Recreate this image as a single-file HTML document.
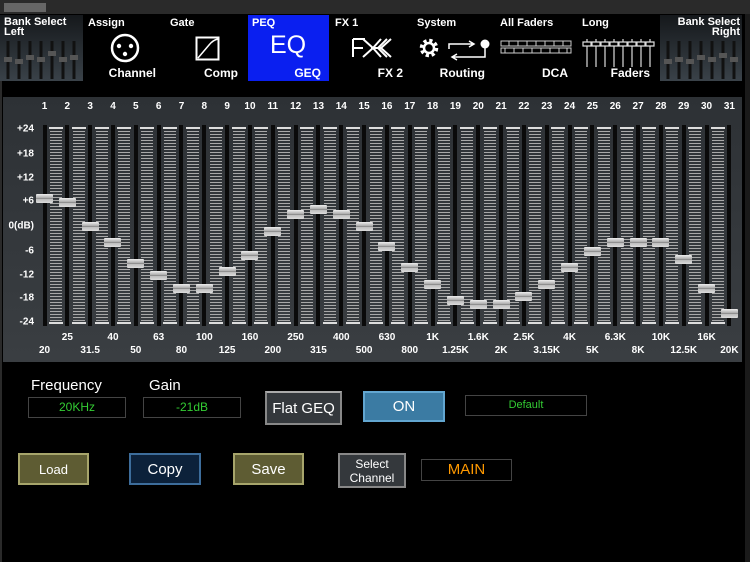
<!DOCTYPE html>
<html><head><meta charset="utf-8"><style>
*{margin:0;padding:0;box-sizing:border-box}
body{width:750px;height:562px;background:#000;overflow:hidden;font-family:"Liberation Sans",Arial,sans-serif;color:#fff;position:relative}
.abs{position:absolute}
.tab{position:absolute;top:15px;height:66px;background:#000;font-weight:bold;font-size:11px}
.tab .t{position:absolute;left:4px;top:2px}
.tab .b{position:absolute;right:8px;bottom:1px;font-size:12px}
.bank{background:linear-gradient(#15181b,#3a4249)}
.panel{position:absolute;left:3px;top:97px;width:739px;height:265px;background:linear-gradient(#2d3135,#3a3e42)}
.lbl{position:absolute;font-weight:bold;font-size:10px;color:#fff;transform:translateX(-50%);white-space:nowrap}
.db{position:absolute;font-weight:bold;font-size:10px;right:716px;transform:translateY(-50%)}
.slot{position:absolute;width:4px;background:#0a0a0a;top:125px;height:201px}
.lad{position:absolute;width:12px;top:128px;height:195px;background:repeating-linear-gradient(#a8a8a8 0 1px,transparent 1px 3px)}
.lad:before{content:"";position:absolute;left:-1px;right:-1px;top:-1px;height:2px;background:#ddd}
.lad:after{content:"";position:absolute;left:-1px;right:-1px;bottom:-1px;height:2px;background:#ddd}
.cap{position:absolute;width:17px;height:9px;background:linear-gradient(#eee,#aaa 45%,#666 50%,#bbb 55%,#ddd);border-radius:1px}
.box{position:absolute;border:1px solid #444;color:#3c3;font-size:12px;text-align:center;background:#000}
.btn{position:absolute;display:flex;align-items:center;justify-content:center;text-align:center;color:#fff}
</style></head><body>
<div class="abs" style="left:0;top:0;width:750px;height:14px;background:#2a2a2a"></div>
<div class="abs" style="left:4px;top:3px;width:42px;height:9px;background:#666"></div>
<div class="abs" style="left:745px;top:14px;width:5px;height:548px;background:#1a1a1a"></div>
<div class="abs" style="left:0;top:81px;width:2px;height:481px;background:#2a2a2a"></div>

<div class="tab bank" style="left:0;width:83px"><div class="t" style="line-height:10px">Bank Select<br>Left</div>
<svg class="abs" style="left:4px;top:26px" width="76" height="38"><g stroke="#111" stroke-width="3"><path d="M4 0V38M15 0V38M26 0V38M37 0V38M48 0V38M59 0V38M70 0V38"/></g><g fill="#555"><rect x="0" y="16" width="8" height="5"/><rect x="11" y="18" width="8" height="5"/><rect x="22" y="14" width="8" height="5"/><rect x="33" y="16" width="8" height="5"/><rect x="44" y="10" width="8" height="5"/><rect x="55" y="16" width="8" height="5"/><rect x="66" y="14" width="8" height="5"/></g></svg></div>
<div class="tab" style="left:84px;width:80px"><div class="t">Assign</div><div class="b">Channel</div>
<svg class="abs" style="left:26px;top:18px" width="30" height="30"><circle cx="15" cy="15" r="13" fill="none" stroke="#fff" stroke-width="2.5"/><circle cx="9" cy="13" r="2.2" fill="#fff"/><circle cx="21" cy="13" r="2.2" fill="#fff"/><circle cx="15" cy="21" r="2.2" fill="#fff"/></svg></div>
<div class="tab" style="left:166px;width:80px"><div class="t">Gate</div><div class="b">Comp</div>
<svg class="abs" style="left:29px;top:21px" width="26" height="26"><rect x="1.5" y="1.5" width="22" height="22" fill="none" stroke="#fff" stroke-width="2"/><path d="M3 22L14 9Q18 4 23 3" fill="none" stroke="#fff" stroke-width="1.5"/></svg></div>
<div class="tab" style="left:248px;width:81px;background:#0a1ff0"><div class="t">PEQ</div><div class="b">GEQ</div>
<div class="abs" style="left:22px;top:16px;font-size:25px;font-weight:normal">EQ</div></div>
<div class="tab" style="left:331px;width:80px"><div class="t">FX 1</div><div class="b">FX 2</div>
<svg class="abs" style="left:20px;top:22px" width="44" height="22"><path d="M2 2H14M2 2V20M2 11H12M12 2L22 11L12 20M20 11H30M30 2L22 11L30 20M40 2L30 11L40 20M36 2L27 11L36 20" fill="none" stroke="#fff" stroke-width="2"/></svg></div>
<div class="tab" style="left:413px;width:80px"><div class="t">System</div><div class="b">Routing</div>
<svg class="abs" style="left:4px;top:20px" width="74" height="26"><circle cx="12" cy="13" r="7" fill="none" stroke="#fff" stroke-width="4.5" stroke-dasharray="3 2.5"/><circle cx="12" cy="13" r="5" fill="none" stroke="#fff" stroke-width="2.5"/><path d="M32 14V9H56M52 6L57 9L52 12M36 22H68V11M40 19L35 22L40 25" fill="none" stroke="#fff" stroke-width="1.5"/><circle cx="68" cy="9" r="4.5" fill="#fff"/></svg></div>
<div class="tab" style="left:496px;width:80px"><div class="t">All Faders</div><div class="b">DCA</div>
<svg class="abs" style="left:4px;top:25px" width="72" height="14"><g fill="none" stroke="#ccc" stroke-width="1"><path d="M1 1h70v5H1zM1 8h70v5H1z"/><path d="M9 1v5M18 1v5M27 1v5M36 1v5M45 1v5M54 1v5M63 1v5M5 8v5M14 8v5M23 8v5M32 8v5M41 8v5M50 8v5M59 8v5M67 8v5"/></g></svg></div>
<div class="tab" style="left:578px;width:80px"><div class="t">Long</div><div class="b">Faders</div>
<svg class="abs" style="left:4px;top:24px" width="74" height="30"><g fill="none" stroke="#ddd" stroke-width="1.2"><path d="M5 0V28M14 0V28M23 0V28M32 0V28M41 0V28M50 0V28M59 0V28M68 0V28"/><path d="M1 3h8v4H1zM10 3h8v4h-8zM19 3h8v4h-8zM28 3h8v4h-8zM37 3h8v4h-8zM46 3h8v4h-8zM55 3h8v4h-8zM64 3h8v4h-8z" fill="#000"/></g></svg></div>
<div class="tab bank" style="left:660px;width:82px"><div class="t" style="left:auto;right:2px;text-align:right;line-height:10px">Bank Select<br>Right</div>
<svg class="abs" style="left:4px;top:26px" width="76" height="38"><g stroke="#111" stroke-width="3"><path d="M4 0V38M15 0V38M26 0V38M37 0V38M48 0V38M59 0V38M70 0V38"/></g><g fill="#555"><rect x="0" y="18" width="8" height="5"/><rect x="11" y="16" width="8" height="5"/><rect x="22" y="18" width="8" height="5"/><rect x="33" y="14" width="8" height="5"/><rect x="44" y="16" width="8" height="5"/><rect x="55" y="12" width="8" height="5"/><rect x="66" y="16" width="8" height="5"/></g></svg></div>

<div class="panel"></div>
<div id="g"></div>

<div class="abs" style="left:31px;top:377px;font-size:15px">Frequency</div>
<div class="abs" style="left:149px;top:377px;font-size:15px">Gain</div>
<div class="box" style="left:28px;top:397px;width:98px;height:21px;line-height:19px">20KHz</div>
<div class="box" style="left:143px;top:397px;width:98px;height:21px;line-height:19px">-21dB</div>
<div class="btn" style="left:265px;top:391px;width:77px;height:34px;background:#34383c;border:2px solid #888;border-top-color:#aaa;font-size:15px">Flat GEQ</div>
<div class="btn" style="left:363px;top:391px;width:82px;height:31px;background:#3b7ba3;border:2px solid #62a6d0;font-size:15px">ON</div>
<div class="box" style="left:465px;top:395px;width:122px;height:21px;line-height:19px;font-size:11px">Default</div>
<div class="btn" style="left:18px;top:453px;width:71px;height:32px;background:#5e5c33;border:2px solid #a7a56b;font-size:13px">Load</div>
<div class="btn" style="left:129px;top:453px;width:72px;height:32px;background:#0c213a;border:2px solid #3d6d9b;font-size:15px">Copy</div>
<div class="btn" style="left:233px;top:453px;width:71px;height:32px;background:#5e5c33;border:2px solid #a7a56b;font-size:15px">Save</div>
<div class="btn" style="left:338px;top:453px;width:68px;height:35px;background:#34383c;border:2px solid #888;font-size:12px;line-height:14px">Select<br>Channel</div>
<div class="box" style="left:421px;top:459px;width:91px;height:22px;line-height:20px;color:#f90;font-size:15px">MAIN</div>

<script>
var f=["20","25","31.5","40","50","63","80","100","125","160","200","250","315","400","500","630","800","1K","1.25K","1.6K","2K","2.5K","3.15K","4K","5K","6.3K","8K","10K","12.5K","16K","20K"];
var cy=[198,202,226,242,263,275,288,288,271,255,231,214,209,214,226,246,267,284,300,304,304,296,284,267,251,242,242,242,259,288,313];
var h="";
var dbs=[["+24",129],["+18",154],["+12",178],["+6",201],["0(dB)",226],["-6",251],["-12",275],["-18",298],["-24",322]];
dbs.forEach(function(d){h+='<div class="db" style="top:'+d[1]+'px">'+d[0]+'</div>'});
for(var i=0;i<31;i++){var x=44.5+22.83*i;
h+='<div class="lbl" style="left:'+x+'px;top:101px">'+(i+1)+'</div>';
h+='<div class="slot" style="left:'+(x-2)+'px"></div>';
if(i<30)h+='<div class="lad" style="left:'+(x+5.4)+'px"></div>';
h+='<div class="lbl" style="left:'+x+'px;top:'+(i%2?332:345)+'px">'+f[i]+'</div>';
}
for(var i=0;i<31;i++){var x=44.5+22.83*i;h+='<div class="cap" style="left:'+(x-8.5)+'px;top:'+(cy[i]-4.5)+'px"></div>';}
document.getElementById("g").innerHTML=h;
</script>
</body></html>
